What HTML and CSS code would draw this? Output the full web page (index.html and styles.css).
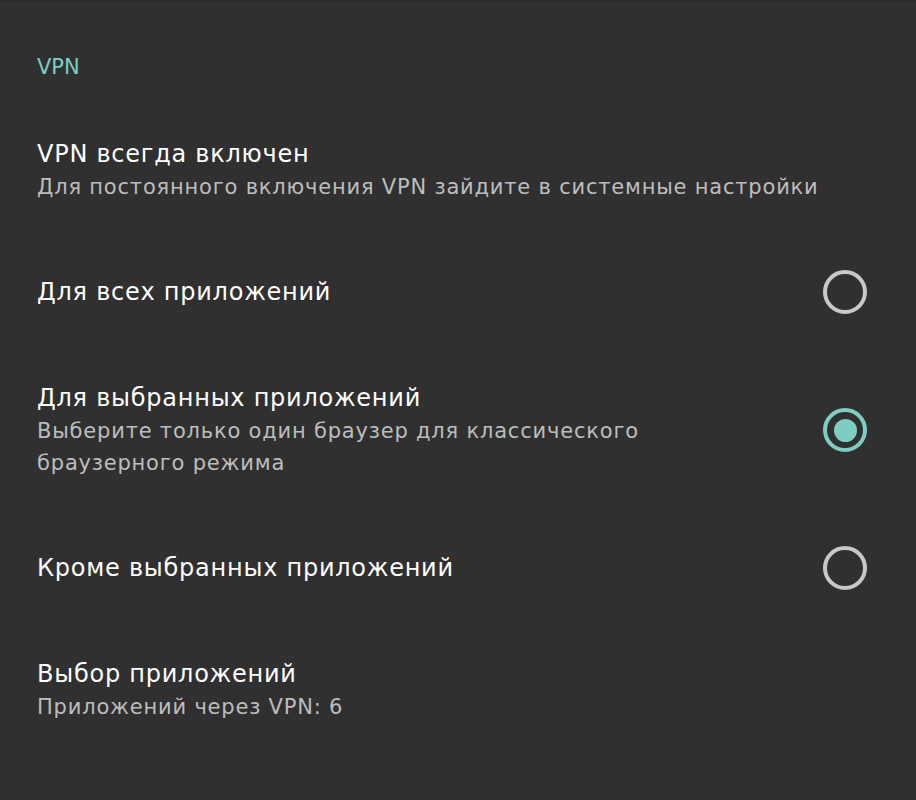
FILE: index.html
```html
<!DOCTYPE html>
<html lang="ru">
<head>
    <meta charset="UTF-8">
    <meta name="viewport" content="width=device-width, initial-scale=1.0">
    <title>VPN</title>
    <link rel="stylesheet" href="styles.css">
</head>
<body>
    <div class="settings">
        <h2 class="section-title">VPN</h2>

        <div class="pref">
            <div class="pref-text">
                <div class="pref-title">VPN всегда включен</div>
                <div class="pref-summary">Для постоянного включения VPN зайдите в системные настройки</div>
            </div>
        </div>

        <label class="pref">
            <div class="pref-text">
                <div class="pref-title">Для всех приложений</div>
            </div>
            <span class="radio"></span>
        </label>

        <label class="pref">
            <div class="pref-text">
                <div class="pref-title">Для выбранных приложений</div>
                <div class="pref-summary">Выберите только один браузер для классического браузерного режима</div>
            </div>
            <span class="radio checked"></span>
        </label>

        <label class="pref">
            <div class="pref-text">
                <div class="pref-title">Кроме выбранных приложений</div>
            </div>
            <span class="radio"></span>
        </label>

        <div class="pref">
            <div class="pref-text">
                <div class="pref-title">Выбор приложений</div>
                <div class="pref-summary">Приложений через VPN: 6</div>
            </div>
        </div>
    </div>
</body>
</html>
```

FILE: styles.css
```css
* {
    margin: 0;
    padding: 0;
    box-sizing: border-box;
}

body {
    font-family: "DejaVu Sans", "Open Sans", sans-serif;
    background-color: #303030;
    color: #ffffff;
    height: 100vh;
    overflow: hidden;
    border-top: 2px solid #2a2a2a;
}

.settings {
    display: flex;
    flex-direction: column;
}

.section-title {
    font-size: 21px;
    font-weight: normal;
    line-height: 30px;
    color: #7ecdc3;
    padding: 50px 37px 19px;
}

.pref {
    display: flex;
    align-items: center;
    gap: 80px;
    padding: 36px 49px 36px 37px;
}

.pref-text {
    flex: 1;
}

.pref-title {
    font-size: 24px;
    line-height: 34px;
    letter-spacing: 0.75px;
    color: #ffffff;
}

.pref-summary {
    font-size: 21px;
    line-height: 32px;
    letter-spacing: 0.8px;
    color: #bdbdbd;
}

.radio {
    width: 44px;
    height: 44px;
    margin: -5px 0;
    border-radius: 50%;
    border: 4px solid #c8c8c8;
    display: flex;
    align-items: center;
    justify-content: center;
    flex-shrink: 0;
}

.radio.checked {
    border-color: #7ecdc3;
}

.radio.checked::after {
    content: "";
    width: 23px;
    height: 23px;
    border-radius: 50%;
    background-color: #7ecdc3;
}
```
